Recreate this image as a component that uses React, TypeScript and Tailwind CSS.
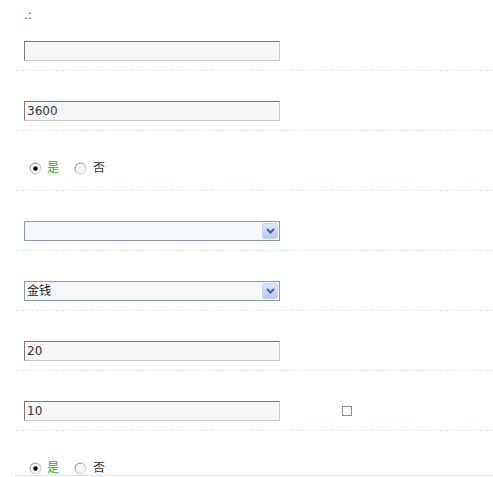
import React from "react";

const font = { fontFamily: '"DejaVu Sans", "Noto Sans CJK SC", sans-serif' };

function TextBox({ value }: { value?: string }) {
  return (
    <div className="w-[256px] h-[20px] bg-[#f7f7f7] border border-t-[#7a7a7a] border-l-[#7a7a7a] border-r-[#c8c8c8] border-b-[#c8c8c8] pl-[2px] text-[12px] leading-[18px] text-[#333]">
      {value}
    </div>
  );
}

function SelectBox({ value }: { value?: string }) {
  return (
    <div className="w-[256px] h-[20px] bg-[#f7f8fa] border border-[#7f9db9] flex items-center justify-between pl-[2px] pr-px text-[12px] leading-[18px] text-[#222]">
      <span>{value}</span>
      <div className="w-[16px] h-[16px] rounded-[2px] border border-[#c3d3fd] bg-gradient-to-b from-[#dde6fe] to-[#b7c8f4] flex items-center justify-center">
        <svg width="9" height="6" viewBox="0 0 9 6">
          <path d="M1 1 L4.5 4.5 L8 1" fill="none" stroke="#4d6185" strokeWidth="2" />
        </svg>
      </div>
    </div>
  );
}

function Radio({ checked }: { checked?: boolean }) {
  return (
    <svg width="13" height="13" viewBox="0 0 13 13" className="shrink-0">
      <defs>
        <linearGradient id="rg" x1="0" y1="0" x2="1" y2="1">
          <stop offset="0" stopColor="#6f6f6f" />
          <stop offset="1" stopColor="#e6e6e6" />
        </linearGradient>
      </defs>
      <circle cx="6.5" cy="6.5" r="5.5" fill="#f6f6f6" stroke="url(#rg)" strokeWidth="1" />
      {checked && <circle cx="6.5" cy="6.5" r="2.2" fill="#000" />}
    </svg>
  );
}

function YesNo() {
  return (
    <div className="flex items-center h-[14px] text-[12px] leading-[14px] pl-[5px]">
      <Radio checked />
      <span className="ml-[5px] text-[#22b322]">是</span>
      <span className="ml-[15px]">
        <Radio />
      </span>
      <span className="ml-[6px] text-[#333]">否</span>
    </div>
  );
}

function Row({ children, last }: { children: React.ReactNode; last?: boolean }) {
  return (
    <div
      className={
        last
          ? "h-[44px] pt-[30px] pl-[8px]"
          : "h-[60px] pt-[30px] pl-[8px] border-b border-dashed border-[#e3ebee]"
      }
    >
      {children}
    </div>
  );
}

export default function App() {
  return (
    <div className="w-[493px] h-[477px] bg-white overflow-hidden" style={font}>
      <div className="ml-[16px]">
        <div className="h-[71px] pt-[7px] pl-[8px] border-b border-dashed border-[#e3ebee]">
          <div className="h-[16px] mb-[18px] text-[12px] leading-[16px] text-[#444]">.:</div>
          <TextBox />
        </div>
        <Row>
          <TextBox value="3600" />
        </Row>
        <Row>
          <YesNo />
        </Row>
        <Row>
          <SelectBox />
        </Row>
        <Row>
          <SelectBox value="金钱" />
        </Row>
        <Row>
          <TextBox value="20" />
        </Row>
        <Row>
          <div className="flex items-center">
            <TextBox value="10" />
            <div className="ml-[62px] w-[10px] h-[10px] border border-[#8a8a8a] bg-white" />
          </div>
        </Row>
        <Row last>
          <YesNo />
        </Row>
      </div>
      <div className="ml-[15px] h-[10px] border-t border-l border-[#e2e2e2]" />
    </div>
  );
}
